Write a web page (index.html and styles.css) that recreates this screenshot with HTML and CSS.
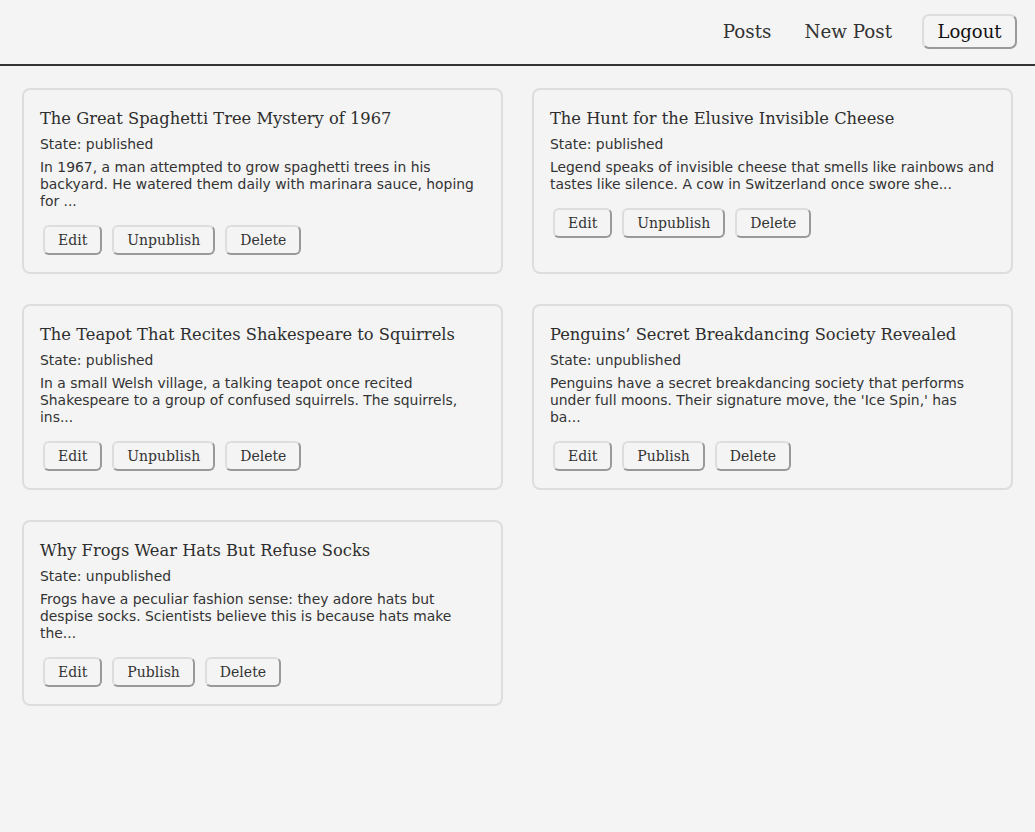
FILE: index.html
```html
<!DOCTYPE html>
<html>
<head>
<meta charset="utf-8">
<link rel="stylesheet" href="styles.css">
</head>
<body>
<header class="topbar">
  <nav class="nav">
    <a class="nav-link" href="#">Posts</a>
    <a class="nav-link" href="#">New Post</a>
    <button class="logout">Logout</button>
  </nav>
</header>
<main class="posts">
  <article class="card">
    <h2 class="title">The Great Spaghetti Tree Mystery of 1967</h2>
    <p class="state">State: published</p>
    <p class="desc">In 1967, a man attempted to grow spaghetti trees in his backyard. He watered them daily with marinara sauce, hoping for ...</p>
    <div class="actions"><button class="btn">Edit</button><button class="btn">Unpublish</button><button class="btn">Delete</button></div>
  </article>
  <article class="card">
    <h2 class="title">The Hunt for the Elusive Invisible Cheese</h2>
    <p class="state">State: published</p>
    <p class="desc">Legend speaks of invisible cheese that smells like rainbows and tastes like silence. A cow in Switzerland once swore she...</p>
    <div class="actions"><button class="btn">Edit</button><button class="btn">Unpublish</button><button class="btn">Delete</button></div>
  </article>
  <article class="card">
    <h2 class="title">The Teapot That Recites Shakespeare to Squirrels</h2>
    <p class="state">State: published</p>
    <p class="desc">In a small Welsh village, a talking teapot once recited Shakespeare to a group of confused squirrels. The squirrels, ins...</p>
    <div class="actions"><button class="btn">Edit</button><button class="btn">Unpublish</button><button class="btn">Delete</button></div>
  </article>
  <article class="card">
    <h2 class="title">Penguins’ Secret Breakdancing Society Revealed</h2>
    <p class="state">State: unpublished</p>
    <p class="desc">Penguins have a secret breakdancing society that performs under full moons. Their signature move, the 'Ice Spin,' has<br>ba...</p>
    <div class="actions"><button class="btn">Edit</button><button class="btn">Publish</button><button class="btn">Delete</button></div>
  </article>
  <article class="card">
    <h2 class="title">Why Frogs Wear Hats But Refuse Socks</h2>
    <p class="state">State: unpublished</p>
    <p class="desc">Frogs have a peculiar fashion sense: they adore hats but despise socks. Scientists believe this is because hats make the...</p>
    <div class="actions"><button class="btn">Edit</button><button class="btn">Publish</button><button class="btn">Delete</button></div>
  </article>
</main>
</body>
</html>
```
FILE: styles.css
```css
html, body {
  margin: 0;
  padding: 0;
  background: #f4f4f4;
  color: #333;
}
body {
  font-family: "DejaVu Sans", Verdana, sans-serif;
  min-height: 832px;
}
.topbar {
  height: 66px;
  border-bottom: 2px solid #333;
  display: flex;
  align-items: center;
  justify-content: flex-end;
  padding: 0 18px 2px;
  box-sizing: border-box;
}
.nav {
  display: flex;
  align-items: center;
  gap: 33px;
  font-family: "DejaVu Serif", Georgia, serif;
}
.nav-link {
  color: #333;
  text-decoration: none;
  font-size: 18.3px;
}
.logout {
  font-family: "DejaVu Serif", Georgia, serif;
  font-size: 18px;
  color: #111;
  background: #f4f4f4;
  border: 2px solid #ddd;
  border-right-color: #999;
  border-bottom-color: #999;
  border-radius: 7px;
  height: 35px;
  padding: 0 13.5px;
  margin-left: -3px;
}
.posts {
  display: grid;
  grid-template-columns: 1fr 1fr;
  column-gap: 29px;
  row-gap: 30px;
  padding: 22px 22px;
}
.card {
  border: 2px solid #ddd;
  border-radius: 8px;
  padding: 16px 12px 16px 16px;
}
.title {
  font-family: "DejaVu Serif", Georgia, serif;
  font-weight: normal;
  font-size: 16.3px;
  color: #2e2e2e;
  margin: 1px 0 0;
  line-height: 24px;
}
.state {
  font-size: 13.9px;
  margin: 4px 0 0;
  line-height: 18px;
}
.desc {
  font-size: 13.9px;
  line-height: 17px;
  margin: 6px 0 0;
}
.actions {
  display: flex;
  gap: 10px;
  margin: 15px 0 1px 3px;
}
.btn {
  font-family: "DejaVu Serif", Georgia, serif;
  font-size: 14px;
  color: #333;
  background: #f4f4f4;
  border: 2px solid #ddd;
  border-right-color: #999;
  border-bottom-color: #999;
  border-radius: 6px;
  height: 30px;
  padding: 0 13px;
}
```
